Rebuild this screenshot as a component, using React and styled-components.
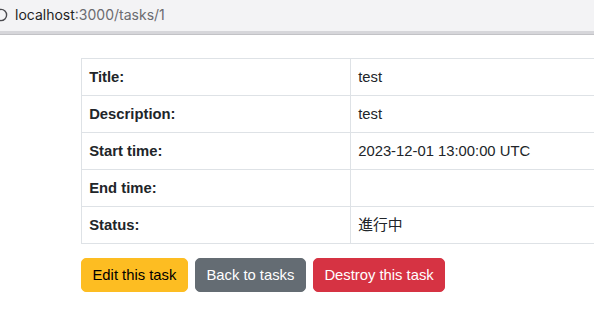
import React from 'react';
import styled, {createGlobalStyle} from 'styled-components';

const GlobalStyle = createGlobalStyle`
  html, body {
    margin: 0;
    padding: 0;
    background: #fff;
    overflow: hidden;
  }
  body {
    font-family: "Liberation Sans", Arial, "Noto Sans CJK JP", sans-serif;
    color: #212529;
  }
`;

const rows = [
  {label: 'Title:', value: 'test'},
  {label: 'Description:', value: 'test'},
  {label: 'Start time:', value: '2023-12-01 13:00:00 UTC'},
  {label: 'End time:', value: ''},
  {label: 'Status:', value: '進行中'},
];

const App = () => {
  return (
    <>
      <GlobalStyle />
      <StyledAddressBar>
        <StyledInfoIcon width="10" height="16" viewBox="0 0 10 16">
          <circle cx="1" cy="8" r="5.6" fill="none" stroke="#4a4a4f" strokeWidth="1.4" />
        </StyledInfoIcon>
        <StyledHost>localhost</StyledHost>
        <StyledPath>:3000/tasks/1</StyledPath>
      </StyledAddressBar>
      <StyledPage>
        <StyledTable>
          <tbody>
            {rows.map((row) => (
              <tr key={row.label}>
                <StyledLabelCell>{row.label}</StyledLabelCell>
                <StyledValueCell>{row.value}</StyledValueCell>
              </tr>
            ))}
          </tbody>
        </StyledTable>
        <StyledActions>
          <StyledButton $variant="warning">Edit this task</StyledButton>
          <StyledButton $variant="secondary">Back to tasks</StyledButton>
          <StyledButton $variant="danger">Destroy this task</StyledButton>
        </StyledActions>
      </StyledPage>
    </>
  );
};

const variants = {
  warning: {bg: '#fdbd22', color: '#000'},
  secondary: {bg: '#646c73', color: '#fff'},
  danger: {bg: '#d63343', color: '#fff'},
};

const StyledAddressBar = styled.div`
  display: flex;
  align-items: center;
  background: #f3f3f5;
  border-bottom: 3px solid #d6d6da;
  box-shadow: 0 1px 0 #c2c2c6;
  font-family: "Inter", "Liberation Sans", sans-serif;
  font-size: 14px;
  padding-bottom: 2px;
  box-sizing: border-box;
  height: 34px;
`;
const StyledInfoIcon = styled.svg`
  display: block;
  margin-right: 5px;
`;
const StyledHost = styled.span`
  color: #1f1f1f;
`;
const StyledPath = styled.span`
  color: #6b6b70;
`;
const StyledPage = styled.div`
  padding: 24px 0 0 81px;
  font-size: 14.8px;
  line-height: 1.5;
  overflow: hidden;
`;
const StyledTable = styled.table`
  border-collapse: collapse;
  width: 600px;
  margin-bottom: 14px;
  border: 1px solid #dee2e6;
  table-layout: fixed;
`;
const StyledLabelCell = styled.th`
  width: 269px;
  text-align: left;
  font-weight: 700;
  padding: 0 7.2px;
  border: 1px solid #dee2e6;
  height: 37px;
  box-sizing: border-box;
`;
const StyledValueCell = styled.td`
  padding: 0 7.2px;
  border: 1px solid #dee2e6;
  height: 37px;
  box-sizing: border-box;
`;
const StyledActions = styled.div`
  display: flex;
  gap: 7px;
`;
const StyledButton = styled.button`
  font-family: inherit;
  font-size: 14.8px;
  line-height: 1.5;
  padding: 0 10.5px;
  border: 1px solid ${(p) => variants[p.$variant].bg};
  border-radius: 5px;
  background: ${(p) => variants[p.$variant].bg};
  color: ${(p) => variants[p.$variant].color};
  height: 34px;
  cursor: pointer;
`;

export default App;
